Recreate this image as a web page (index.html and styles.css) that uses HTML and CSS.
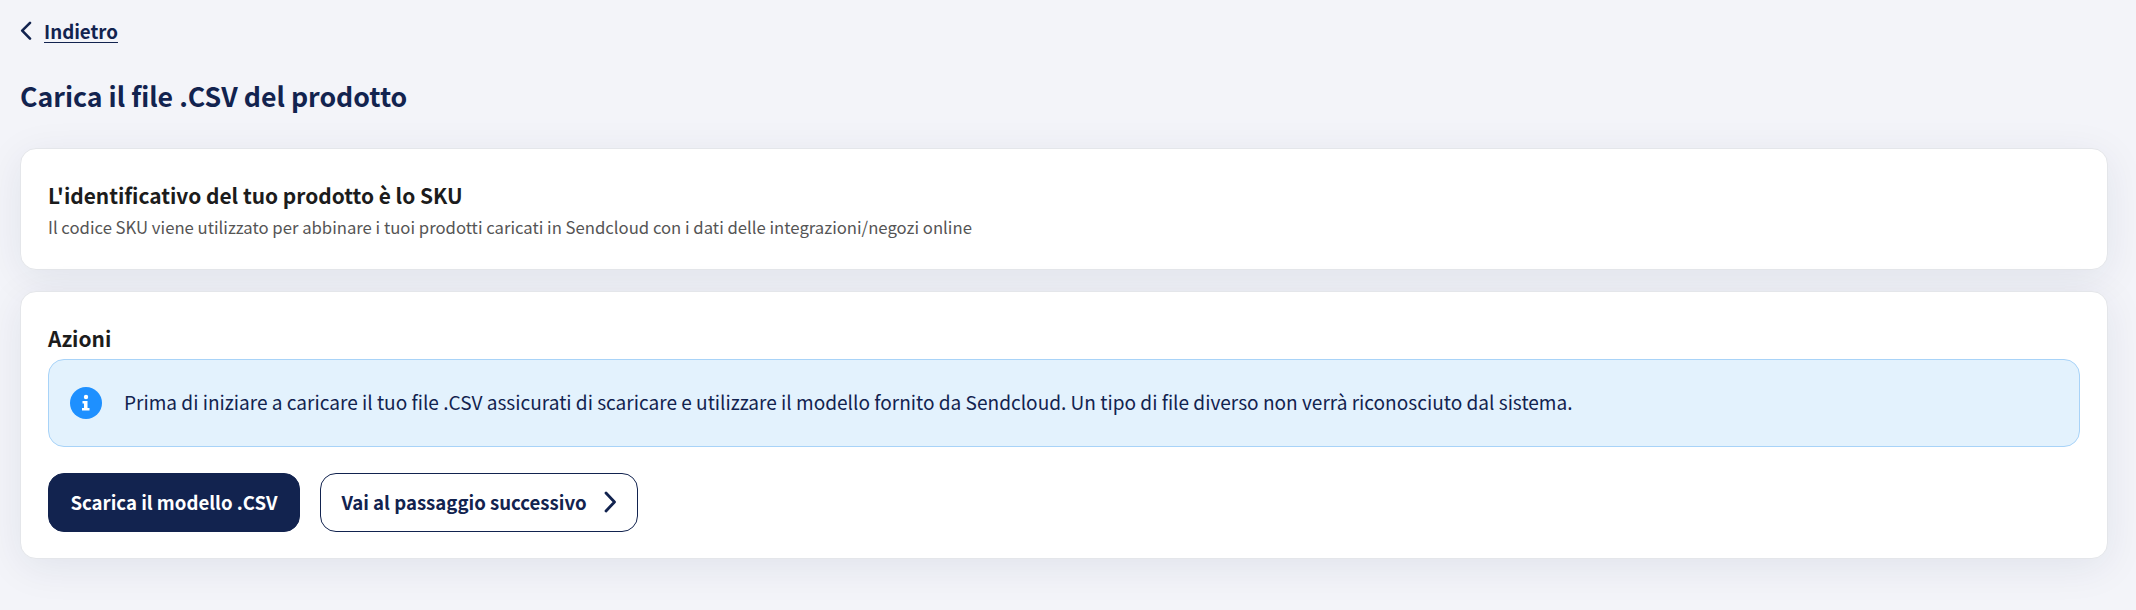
FILE: index.html
```html
<!DOCTYPE html>
<html lang="it">
<head>
<meta charset="utf-8">
<title>Carica il file .CSV del prodotto</title>
<link rel="stylesheet" href="styles.css">
</head>
<body>
<main class="page">
  <a class="back" href="#">
    <svg class="back-icon" width="12" height="20" viewBox="0 0 12 20" fill="none"><path d="M10 1.8L2.2 9.6L10 17.6" stroke="currentColor" stroke-width="2.6" stroke-linecap="round" stroke-linejoin="round"/></svg>
    <span class="back-label">Indietro</span>
  </a>
  <h1 class="title">Carica il file .CSV del prodotto</h1>
  <section class="card card-sku">
    <h2 class="card-title">L'identificativo del tuo prodotto è lo SKU</h2>
    <p class="card-sub">Il codice SKU viene utilizzato per abbinare i tuoi prodotti caricati in Sendcloud con i dati delle integrazioni/negozi online</p>
  </section>
  <section class="card card-actions">
    <h2 class="card-title actions-title">Azioni</h2>
    <div class="alert">
      <svg class="alert-icon" width="32" height="32" viewBox="0 0 32 32"><circle cx="16" cy="16" r="16" fill="#1e90ff"/><circle cx="16" cy="10" r="2.2" fill="#fff"/><path d="M12.5 14h5v7h2v2.6h-7.5V21h2v-4.4h-1.5z" fill="#fff"/></svg>
      <p class="alert-text">Prima di iniziare a caricare il tuo file .CSV assicurati di scaricare e utilizzare il modello fornito da Sendcloud. Un tipo di file diverso non verrà riconosciuto dal sistema.</p>
    </div>
    <div class="actions">
      <button class="btn btn-primary" type="button">Scarica il modello .CSV</button>
      <button class="btn btn-outline" type="button"><span class="btn-label">Vai al passaggio successivo</span>
        <svg width="13" height="22" viewBox="0 0 13 22" fill="none"><path d="M2 2L10.5 11L2 20" stroke="currentColor" stroke-width="2.8" stroke-linecap="round" stroke-linejoin="round"/></svg>
      </button>
    </div>
  </section>
</main>
</body>
</html>
```
FILE: styles.css
```css
* { box-sizing: border-box; }
html, body { margin: 0; height: 100%; }
body {
  background: #f3f4f9;
  font-family: "Noto Sans CJK SC", "Noto Sans", sans-serif;
  color: #12234f;
  overflow: hidden;
}
.page {
  padding: 20px 28px 0 20px;
  display: flex;
  flex-direction: column;
}
.back {
  display: flex;
  align-items: center;
  gap: 12px;
  height: 22px;
  color: #12234f;
  text-decoration: none;
}
.back-label {
  font-size: 18.7px;
  line-height: 22px;
  font-weight: 700;
  text-decoration: underline;
  text-underline-offset: 3px;
}
.title {
  margin: 35px 0 0;
  font-size: 26.7px;
  line-height: 38px;
  font-weight: 700;
  color: #12234f;
}
.card {
  background: #fff;
  border: 1px solid #e4e6ea;
  border-radius: 16px;
  padding: 0 27px;
  box-shadow: 0 8px 40px rgba(18, 35, 79, 0.08);
}
.card-sku {
  margin-top: 33px;
  height: 122px;
  padding-top: 30px;
}
.card-actions {
  margin-top: 21px;
  height: 268px;
  padding-top: 30px;
}
.card-title {
  margin: 0;
  font-size: 20.9px;
  line-height: 32px;
  font-weight: 700;
  color: #1c1c1c;
}
.card-sub {
  margin: 4px 0 0;
  font-size: 16.7px;
  line-height: 24px;
  font-weight: 400;
  color: #555;
}
.actions-title { height: 37px; }
.alert {
  display: flex;
  align-items: center;
  gap: 22px;
  height: 88px;
  padding: 0 21px;
  background: #e3f2fd;
  border: 1px solid #a8d3f8;
  border-radius: 16px;
}
.alert-icon { flex: none; }
.alert-text {
  margin: 0 0 2px;
  font-size: 19.07px;
  line-height: 28px;
  color: #12234f;
}
.actions {
  display: flex;
  gap: 20px;
  margin-top: 26px;
}
.btn {
  display: flex;
  align-items: center;
  height: 59px;
  padding: 0 0 2px;
  font-family: inherit;
  font-size: 18.6px;
  font-weight: 700;
  border-radius: 16px;
  border: 1px solid #12234f;
}
.btn-primary {
  width: 252px;
  justify-content: center;
  background: #12234f;
  color: #fff;
}
.btn-outline {
  width: 318px;
  justify-content: center;
  gap: 17px;
  background: #fff;
  color: #12234f;
}
```
